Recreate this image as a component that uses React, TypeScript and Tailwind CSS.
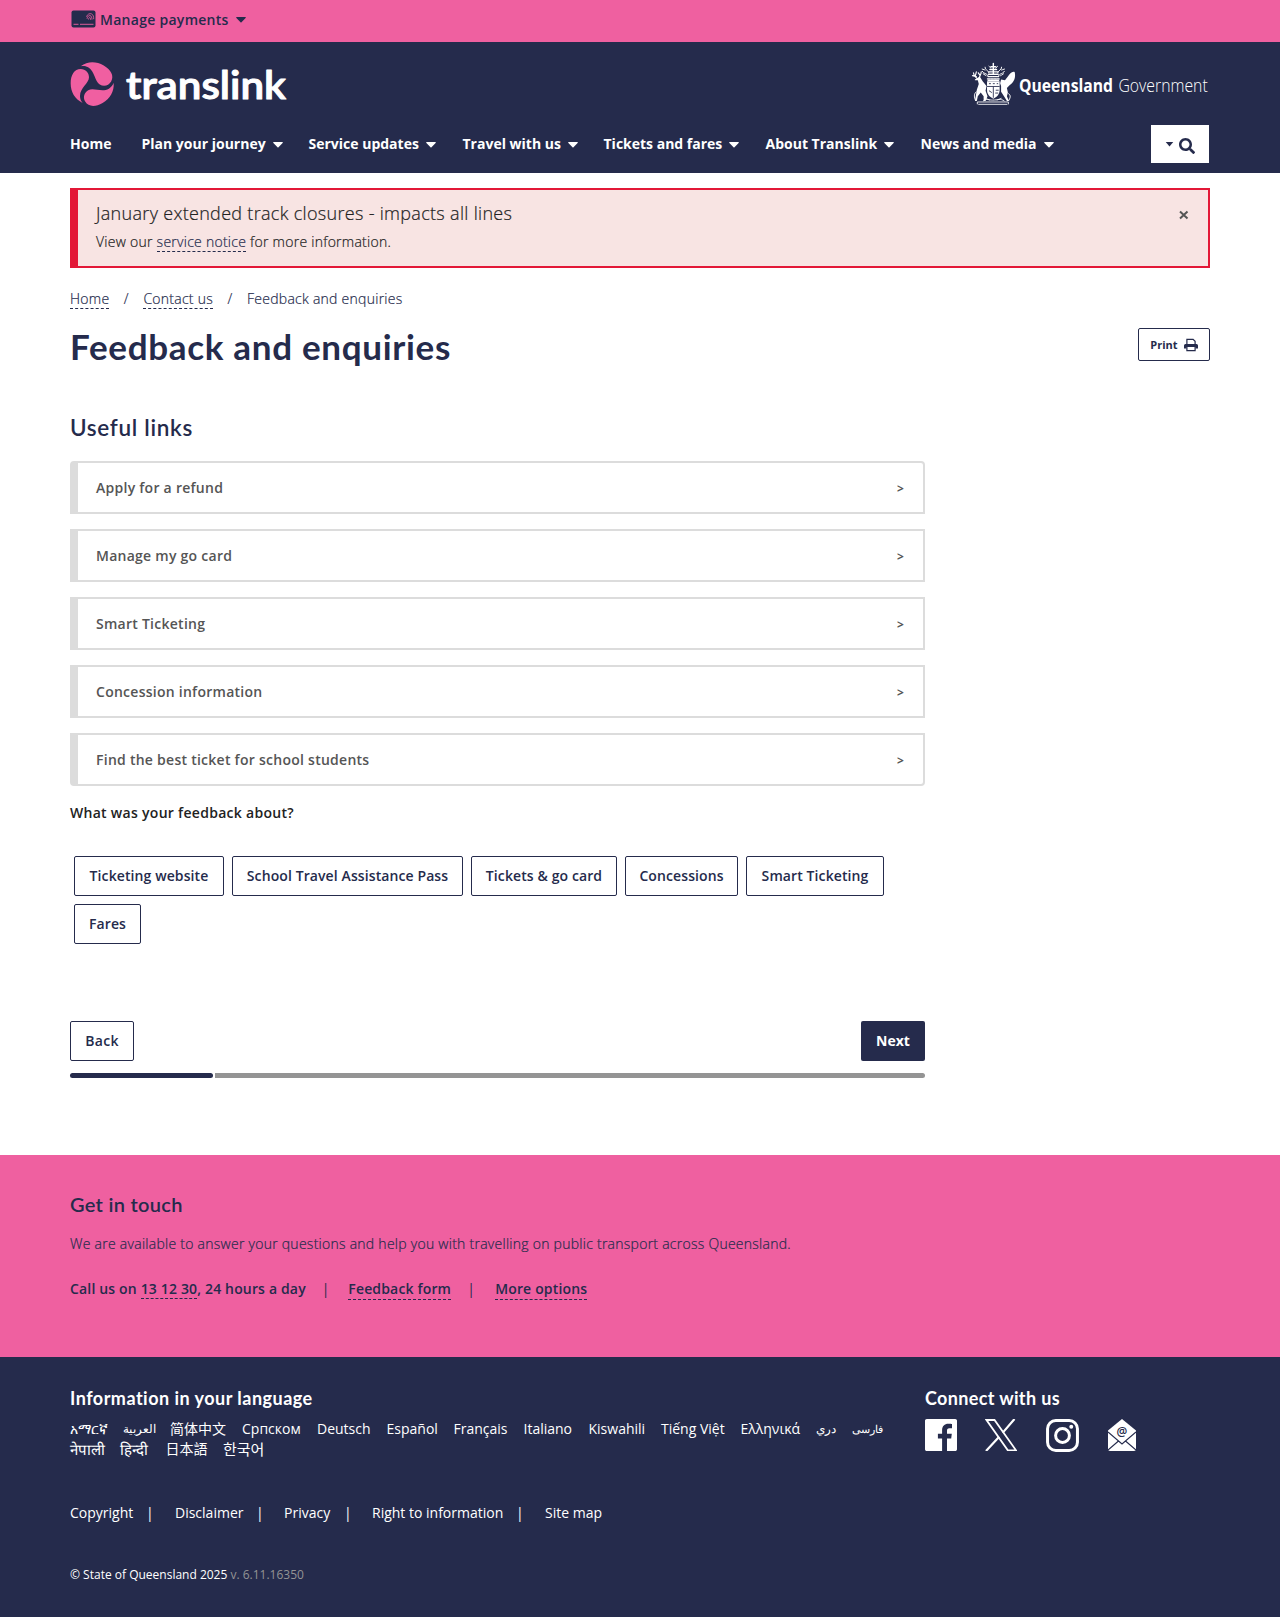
import React from "react";
import { FaSearch } from "react-icons/fa";

const NAV = [
  { label: "Plan your journey", box: "w-[167px]" },
  { label: "Service updates", box: "w-[154px]" },
  { label: "Travel with us", box: "w-[141px]" },
  { label: "Tickets and fares", box: "w-[162px]" },
  { label: "About Translink", box: "w-[155px]" },
  { label: "News and media", box: "w-[140px]" },
];

const LINKS = [
  "Apply for a refund",
  "Manage my go card",
  "Smart Ticketing",
  "Concession information",
  "Find the best ticket for school students",
];

const TOPICS = [
  { label: "Ticketing website", box: "w-[150px]" },
  { label: "School Travel Assistance Pass", box: "w-[231px]" },
  { label: "Tickets & go card", box: "w-[146px]" },
  { label: "Concessions", box: "w-[113px]" },
  { label: "Smart Ticketing", box: "w-[138px]" },
  { label: "Fares", box: "w-[67px]" },
];

const LANGS_TOP = [
  { label: "አማርኛ", box: "w-[53px]" },
  { label: "العربية", box: "w-[47px] text-[12px]" },
  { label: "简体中文", box: "w-[72px]" },
  { label: "Српском", box: "w-[75px]" },
  { label: "Deutsch", box: "w-[69.5px]" },
  { label: "Español", box: "w-[67px]" },
  { label: "Français", box: "w-[70px]" },
  { label: "Italiano", box: "w-[65px]" },
  { label: "Kiswahili", box: "w-[72.5px]" },
  { label: "Tiếng Việt", box: "w-[79.5px]" },
  { label: "Ελληνικά", box: "w-[75px]" },
  { label: "دري", box: "w-[36.5px] text-[12px]" },
  { label: "فارسی", box: "w-[31px] text-[10.5px]" },
];

const LANGS_BOTTOM = [
  { label: "नेपाली", box: "w-[49.5px] text-[15px]" },
  { label: "हिन्दी", box: "w-[46px] text-[15px]" },
  { label: "日本語", box: "w-[57.5px]" },
  { label: "한국어", box: "w-[42px] text-[15px]" },
];

const LEGAL = [
  { label: "Copyright", box: "w-[76px]", sep: "w-[29px]" },
  { label: "Disclaimer", box: "w-[81px]", sep: "w-[28px]" },
  { label: "Privacy", box: "w-[60px]", sep: "w-[28px]" },
  { label: "Right to information", box: "w-[144px]", sep: "w-[29px]" },
];

const BLADE =
  "M98 309 C74 298 62 276 62 250 C62 225 73 207 92 207 C107 207 117 218 117 232 C117 250 90 264 90 288 C90 297 93 303 98 309Z";

function Caret({ className }: { className?: string }) {
  return (
    <svg viewBox="0 0 10 6" className={"h-[6px] w-[10px] shrink-0 " + (className ?? "")}>
      <path d="M0.8 0h8.4c.6 0 .8.5.4.9L5.5 5.2a.7.7 0 0 1-1 0L.4.9C0 .5.2 0 .8 0Z" fill="currentColor" />
    </svg>
  );
}

function CardIcon() {
  return (
    <svg viewBox="0 0 25 18" className="h-[18px] w-[25px] shrink-0">
      <rect x="0.5" y="0.5" width="24" height="17" rx="2" fill="#252b4c" />
      <path d="M2.5 14.3h5M9 14.3h13.5" stroke="#ef60a3" strokeWidth="0.9" />
      <path
        d="M15.5 6.8c.8-2.6 3.2-3.8 5.2-2.8 1.5.8 2 2.500 2 5.200M16 8.800c.5-2.500 1.900-3.600 3.200-3.200 1.300.4 1.700 2 1.800 4M17.500 9.500c.3-1.500.8-2.200 1.400-2 .6.200.6 1.200.7 2.300"
        stroke="#ef60a3"
        strokeWidth="0.8"
        fill="none"
      />
    </svg>
  );
}

function TranslinkLogo() {
  return (
    <svg viewBox="0 0 224 52" className="h-[52px] w-[224px]">
      <g transform="translate(-20 -60) scale(0.33333)" fill="#f05fa1">
        <path d={BLADE} />
        <path d={BLADE} transform="rotate(120 127 252)" />
        <path d={BLADE} transform="rotate(240 127 252)" />
      </g>
      <text
        x="56"
        y="38.5"
        textLength="160"
        lengthAdjust="spacingAndGlyphs"
        fontFamily="Lato"
        fontWeight="600"
        fontSize="38.5"
        fill="#fff"
        stroke="#fff"
        strokeWidth="1"
        strokeLinejoin="round"
      >
        translink
      </text>
    </svg>
  );
}

function GovLogo() {
  return (
    <svg viewBox="0 0 238 46" className="h-[46px] w-[238px] overflow-visible">
      <g transform="translate(0.5 0.5) scale(0.97 0.94)">
        <g stroke="#fff" fill="none" strokeWidth="1" strokeLinecap="round">
          {/* crest plume */}
          <path
            d="M17 14c-2-3-5-2-6-5M18 11c-1-3-4-3-4-6M28 14c2-3 5-2 6-5M27 11c1-3 4-3 4-6M11 7l3 1M34 7l-3 1M20 6l-2-2M25 6l2-2M12 12l3 2M33 12l-3 2"
            strokeDasharray="2 0.8"
          />
          <path d="M22.5 1v11M20 4.5h5M19 7.5h7M18 10h9M17.5 12.5h10M17 15h11" strokeDasharray="1.8 0.7" strokeWidth="1.5" />
          <path d="M16.5 17.5h12M17 19h11" strokeWidth="1.4" strokeDasharray="2.5 0.8" />
          {/* antlers */}
          <path d="M7 18c-2-2-5-3-5-7M5 15l-4-1M4 14l1-4M8 17c0-3 2-4 2-7M9 14l-2-3" strokeWidth="1.2" />
        </g>
        {/* supporters */}
        <path d="M3.5 18l5-3 3 5 4 5-1 5 2 6-2 5h-2l0-5-3-4-3 4-1 5h-2l1-6 1-6 2-6-1-4-3 0Z" fill="#fff" />
        <path d="M44.5 10c1.500 6-1 11-5 14l-3 3 1 5-1 4 2 5h-2l-3-5-3-5 0-6-1-3 1-4 4 1 3-4c2-3 4-6 7-5Z" fill="#fff" />
        <path d="M5 31c-3 3-2 6-1 9M38 33c3 2 2 5 0 8" stroke="#fff" fill="none" />
        {/* shield */}
        <path d="M16 20h13v9c0 5-3 8-6.500 9.500C19 37 16 34 16 29Z" fill="#fff" />
        <path
          d="M16 25.5h13M22.5 25.5v12M18 22.5h2M22 22.5h2M26 22.5h1.500M18 30l3 2M25 29.5h3M24.5 32.5h3"
          stroke="#252b4c"
          strokeWidth="0.9"
        />
        <path
          d="M6 42h32M7 44.5h30M6 42v2.500M38 42v2.500M12 41c3-3 5-1 10-1s8-2 12 1M14 38l5 2M31 38l-5 2"
          stroke="#fff"
          fill="none"
          strokeWidth="0.9"
        />
      </g>
      <g transform="translate(48 29.7) scale(0.85 1)" fill="#fff" fontFamily="Open Sans" fontSize="18.5">
        <text textLength="110.6" lengthAdjust="spacingAndGlyphs" fontWeight="700">
          Queensland
        </text>
        <text x="117" textLength="105" lengthAdjust="spacingAndGlyphs" fontWeight="300">
          Government
        </text>
      </g>
    </svg>
  );
}

function PrinterIcon() {
  return (
    <svg viewBox="0 0 14 14" className="h-[14px] w-[14px]">
      <path d="M2.9 6.500V1.300h6.200l2 2v3.200" fill="none" stroke="#252b4c" strokeWidth="1.2" />
      <path d="M1.500 6h11A1.500 1.500 0 0 1 14 7.500V10.500h-2.500V9h-9v1.500H0V7.500A1.500 1.500 0 0 1 1.500 6Z" fill="#252b4c" />
      <path d="M2.900 9v3.700h8.200V9" fill="none" stroke="#252b4c" strokeWidth="1.2" />
    </svg>
  );
}

function Header() {
  return (
    <header className="h-[131px] bg-[#252b4c]">
      <div className="mx-auto w-[1140px]">
        <div className="flex h-[83px] items-start justify-between pt-[18px]">
          <TranslinkLogo />
          <div className="mr-px pt-[2px]">
            <GovLogo />
          </div>
        </div>
        <div className="flex h-[38px] text-sm font-bold text-white">
          <a className="w-[71.5px] leading-[38px]">Home</a>
          {NAV.map((n) => (
            <a key={n.label} className={"flex items-center gap-[7px] whitespace-nowrap leading-[38px] " + n.box}>
              {n.label}
              <Caret className="mt-px" />
            </a>
          ))}
          <button className="mr-px ml-auto flex w-[58px] items-center justify-center gap-[5px] bg-white text-[#252b4c]">
            <svg viewBox="0 0 10 6" className="h-[5px] w-[9px]">
              <path d="M.5 0h9L5 5.5Z" fill="currentColor" />
            </svg>
            <FaSearch className="mt-[3px] h-[16px] w-[16px]" />
          </button>
        </div>
      </div>
    </header>
  );
}

export default function App() {
  return (
    <div className="min-h-[1617px] w-[1280px] bg-white font-['Open_Sans','Noto_Sans_CJK_SC',sans-serif] text-sm text-[#252b4c]">
      <div className="h-[42px] bg-[#ef60a0]">
        <div className="mx-auto flex h-[38px] w-[1140px] items-center pl-px">
          <CardIcon />
          <span className="mt-[2px] ml-1 leading-5 font-semibold tracking-[0.28px]">Manage payments</span>
          <Caret className="mt-[2px] ml-[7px]" />
        </div>
      </div>
      <Header />

      <main className="mx-auto h-[982px] w-[1140px] pt-[15px]">
        <section className="flex h-[80px] justify-between border-2 border-l-8 border-[#e31837] bg-[#f8e4e3] pl-[18px] text-[#222]">
          <div>
            <h2 className="mt-[9px] text-lg leading-7 font-light tracking-[0.31px] [-webkit-text-stroke:0.2px]">
              January extended track closures - impacts all lines
            </h2>
            <p className="mt-[5px] leading-5 font-light tracking-[0.26px] [-webkit-text-stroke:0.2px]">
              View our <a className="border-b border-dashed border-[#252b4c] text-[#252b4c]">service notice</a> for more information.
            </p>
          </div>
          <button className="mt-[15px] mr-[17px] h-[20px] w-[14px]">
            <svg viewBox="0 0 14 14" className="w-[14px]">
              <path d="M3 3.5l7.500 7M10.500 3.500l-7.500 7" stroke="#555" strokeWidth="2" />
            </svg>
          </button>
        </section>

        <nav className="mt-[21px] flex h-[20px] leading-5 font-light tracking-[0.26px] [-webkit-text-stroke:0.2px]">
          <a className="border-b border-dashed border-[#252b4c]">Home</a>
          <span className="w-[34px] text-center">/</span>
          <a className="border-b border-dashed border-[#252b4c]">Contact us</a>
          <span className="w-[34px] text-center">/</span>
          <span>Feedback and enquiries</span>
        </nav>

        <div className="mt-[14px] flex items-start justify-between">
          <h1 className="-mt-px h-[51px] font-['Lato',sans-serif] text-[35px] leading-[49px] font-bold tracking-[0.68px]">Feedback and enquiries</h1>
          <button className="mt-[5px] flex h-[33px] w-[72px] items-center justify-center gap-[6px] rounded-[2px] border border-[#252b4c] text-[11px] font-bold">
            Print
            <PrinterIcon />
          </button>
        </div>

        <div className="w-[855px]">
          <h2 className="mt-[39px] font-['Lato',sans-serif] text-[22.5px] leading-[32px] font-semibold tracking-[0.7px]">Useful links</h2>
          <ul className="mt-[17px] flex flex-col gap-[15px] font-semibold tracking-[0.26px] text-[#555]">
            {LINKS.map((l) => (
              <li
                key={l}
                className="flex h-[53px] items-center justify-between border-2 border-l-8 border-[#dcdcdc] pr-[19px] pl-[18px] first:rounded-t last:rounded-b"
              >
                {l}
                <span className="pt-0.5 text-xs font-bold">&gt;</span>
              </li>
            ))}
          </ul>
          <p className="mt-[17px] leading-5 font-semibold tracking-[0.29px] text-[#222]">What was your feedback about?</p>
          <div className="mt-[33px] flex flex-wrap gap-2 px-1">
            {TOPICS.map((t) => (
              <button
                key={t.label}
                className={"h-[40px] rounded-[2px] border border-[#252b4c] font-semibold tracking-[0.1px] whitespace-nowrap " + t.box}
              >
                {t.label}
              </button>
            ))}
          </div>
          <div className="mt-[77px] flex justify-between">
            <button className="h-[40px] w-[64px] rounded-[2px] border border-[#252b4c] font-semibold tracking-[0.25px]">Back</button>
            <button className="h-[40px] w-[64px] rounded-[2px] bg-[#252b4c] font-bold text-white">Next</button>
          </div>
          <div className="mt-[12px] flex h-[5px] gap-[2px]">
            <div className="w-[143px] rounded-[3px] bg-[#252b4c]" />
            <div className="flex-1 rounded-r-[3px] bg-[#949494]" />
          </div>
        </div>
      </main>

      <section className="h-[202px] bg-[#ef60a0]">
        <div className="mx-auto w-[1140px] pt-[35px]">
          <h2 className="font-['Lato',sans-serif] text-[20px] leading-[28px] font-semibold tracking-[0.3px]">Get in touch</h2>
          <p className="mt-[16px] leading-5 font-light tracking-[0.26px] [-webkit-text-stroke:0.2px]">
            We are available to answer your questions and help you with travelling on public transport across Queensland.
          </p>
          <div className="mt-[25px] flex leading-5 font-semibold tracking-[0.16px]">
            <span>
              Call us on <a className="border-b border-dashed border-[#252b4c]">13 12 30</a>, 24 hours a day
            </span>
            <span className="w-[42.5px] pl-[16px] font-normal">|</span>
            <a className="border-b border-dashed border-[#252b4c]">Feedback form</a>
            <span className="w-[44px] pl-[16px] font-normal">|</span>
            <a className="border-b border-dashed border-[#252b4c]">More options</a>
          </div>
        </div>
      </section>

      <footer className="h-[260px] bg-[#252b4c] text-white">
        <div className="mx-auto flex w-[1140px] pt-[27px]">
          <div className="w-[855px]">
            <h3 className="font-['Lato',sans-serif] text-[18px] leading-[28px] font-bold tracking-[0.48px]">Information in your language</h3>
            <div className="mt-[7px] flex h-5 leading-5 whitespace-nowrap">
              {LANGS_TOP.map((l) => (
                <a key={l.label} className={l.box + " leading-5"}>
                  {l.label}
                </a>
              ))}
            </div>
            <div className="flex h-5 leading-5 whitespace-nowrap">
              {LANGS_BOTTOM.map((l) => (
                <a key={l.label} className={l.box + " leading-5"}>
                  {l.label}
                </a>
              ))}
            </div>
            <div className="mt-[44px] flex leading-5 whitespace-nowrap">
              {LEGAL.map((l) => (
                <React.Fragment key={l.label}>
                  <a className={l.box}>{l.label}</a>
                  <span className={l.sep}>|</span>
                </React.Fragment>
              ))}
              <a>Site map</a>
            </div>
            <p className="mt-[42px] text-xs leading-5">
              © State of Queensland 2025 <span className="text-[#949494]">v. 6.11.16350</span>
            </p>
          </div>
          <div>
            <h3 className="font-['Lato',sans-serif] text-[18px] leading-[28px] font-bold tracking-[0.35px]">Connect with us</h3>
            <div className="mt-[7px] flex">
              <svg viewBox="0 0 32 32" className="h-8 w-8">
                <path
                  d="M1.8 0h28.4C31.2 0 32 .8 32 1.8v28.4c0 1-.8 1.8-1.8 1.8H22V19.6h4.2l.6-4.8H22v-3.1c0-1.4.4-2.4 2.4-2.4H27V5c-.4-.1-2-.2-3.7-.2-3.7 0-6.2 2.3-6.2 6.4v3.6h-4.2v4.8h4.2V32H1.8C.8 32 0 31.2 0 30.2V1.8C0 .8.8 0 1.8 0Z"
                  fill="#fff"
                />
              </svg>
              <svg viewBox="0 0 32 32" className="ml-[28px] h-8 w-8">
                <path d="M1.5 1h8L31 31.3h-8.2Z" fill="none" stroke="#fff" strokeWidth="1.8" />
                <path d="M29.5 0L17.8 13.6M14.2 17.8L1 32" fill="none" stroke="#fff" strokeWidth="2.2" />
              </svg>
              <svg viewBox="0 0 32 32" className="ml-[29px] h-[33px] w-[33px]">
                <rect x="1.5" y="1.5" width="29" height="29" rx="8" fill="none" stroke="#fff" strokeWidth="2.9" />
                <circle cx="16" cy="16" r="6.7" fill="none" stroke="#fff" strokeWidth="2.9" />
                <circle cx="24.5" cy="7.5" r="1.9" fill="#fff" />
              </svg>
              <svg viewBox="0 0 28 32" className="ml-[29px] h-8 w-[28px]">
                <path d="M14 0L28 11.5V30a2 2 0 0 1-2 2H2a2 2 0 0 1-2-2V11.5Z" fill="#fff" />
                <path d="M0 13l14 12L28 13M0 31l10.5-9M28 31l-10.5-9" fill="none" stroke="#252b4c" strokeWidth="1.1" />
                <text x="14" y="16.5" textAnchor="middle" fontFamily="Open Sans" fontSize="12" fontWeight="600" fill="#252b4c">
                  @
                </text>
              </svg>
            </div>
          </div>
        </div>
      </footer>
    </div>
  );
}
